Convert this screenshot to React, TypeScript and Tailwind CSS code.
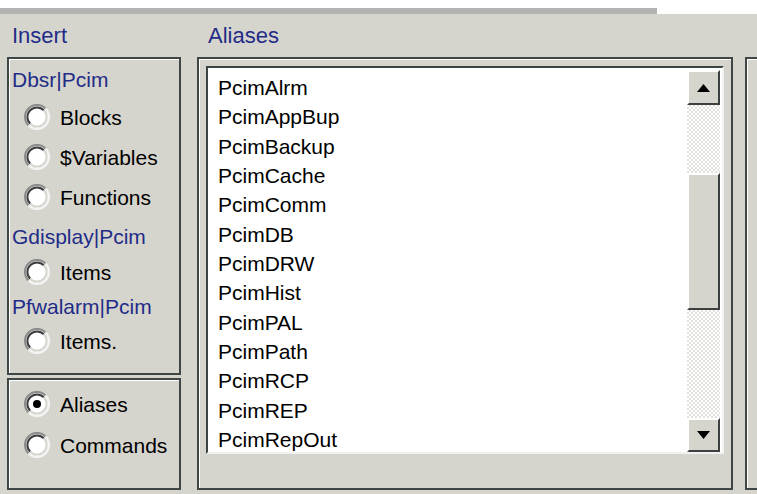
import React from 'react';

const aliases = [
  'PcimAlrm',
  'PcimAppBup',
  'PcimBackup',
  'PcimCache',
  'PcimComm',
  'PcimDB',
  'PcimDRW',
  'PcimHist',
  'PcimPAL',
  'PcimPath',
  'PcimRCP',
  'PcimREP',
  'PcimRepOut',
];

const Radio: React.FC<{ checked?: boolean }> = ({ checked }) => (
  <svg width="26" height="26" viewBox="0 0 26 26" className="shrink-0">
    <circle cx="13" cy="13" r="11" fill="#fff" />
    <path d="M4.5 21.5 A12 12 0 0 1 21.5 4.5" fill="none" stroke="#8a8a8a" strokeWidth="2" />
    <path d="M21.5 4.5 A12 12 0 0 1 4.5 21.5" fill="none" stroke="#f4f4f4" strokeWidth="2" />
    <path d="M6.2 19.8 A9.6 9.6 0 0 1 19.8 6.2" fill="none" stroke="#3c3c3c" strokeWidth="2" />
    <path d="M19.8 6.2 A9.6 9.6 0 0 1 6.2 19.8" fill="none" stroke="#d6d5cd" strokeWidth="2" />
    {checked && <circle cx="13" cy="13" r="4" fill="#000" />}
  </svg>
);

const RadioRow: React.FC<{ label: string; h: string; checked?: boolean }> = ({ label, h, checked }) => (
  <div className={`flex items-center gap-[10px] pl-[15px] ${h}`}>
    <Radio checked={checked} />
    <span className="text-black">{label}</span>
  </div>
);

const GroupLabel: React.FC<{ label: string; h: string }> = ({ label, h }) => (
  <div className={`flex items-center pl-[3px] text-[#1f2c88] ${h}`}>{label}</div>
);

const ScrollButton: React.FC<{ dir: 'up' | 'down'; h: string }> = ({ dir, h }) => (
  <div
    className={`flex items-center justify-center bg-[#d6d5cd] border-2 border-t-white border-l-white border-b-[#3c4040] border-r-[#3c4040] ${h}`}
  >
    <svg width="13" height="8" viewBox="0 0 13 8">
      {dir === 'up' ? <polygon points="6.5,0 13,8 0,8" fill="#000" /> : <polygon points="0,0 13,0 6.5,8" fill="#000" />}
    </svg>
  </div>
);

export default function App() {
  return (
    <div
      className="w-[757px] h-[494px] bg-white flex flex-col overflow-hidden text-[21px] leading-none"
      style={{ fontFamily: '"Liberation Sans", Arial, sans-serif' }}
    >
      <div className="h-[8px] shrink-0" />
      <div className="h-[6px] w-[657px] bg-[#b3b3b3] shrink-0" />
      <div className="flex-1 bg-[#d6d5cd] flex flex-col">
        {/* Headers */}
        <div className="h-[43px] flex items-center text-[#1f2c88] text-[22px]">
          <span className="w-[196px] pl-[12px]">Insert</span>
          <span className="pl-[12px]">Aliases</span>
        </div>

        <div className="flex h-[433px] pl-[7px]">
          {/* Insert options */}
          <div className="w-[174px] flex flex-col gap-[3px]">
            <div className="h-[318px] border-2 border-[#3e4646] shadow-[inset_1px_1px_0_#fff] pt-[2px]">
              <GroupLabel label="Dbsr|Pcim" h="h-[36px]" />
              <RadioRow label="Blocks" h="h-[40px]" />
              <RadioRow label="$Variables" h="h-[40px]" />
              <RadioRow label="Functions" h="h-[40px]" />
              <GroupLabel label="Gdisplay|Pcim" h="h-[38px]" />
              <RadioRow label="Items" h="h-[34px]" />
              <GroupLabel label="Pfwalarm|Pcim" h="h-[35px]" />
              <RadioRow label="Items." h="h-[34px]" />
            </div>
            <div className="h-[112px] border-2 border-[#3e4646] shadow-[inset_1px_1px_0_#fff] pt-[4px]">
              <RadioRow label="Aliases" h="h-[40px]" checked />
              <RadioRow label="Commands" h="h-[42px]" />
            </div>
          </div>

          {/* Aliases list */}
          <div className="ml-[16px] w-[536px] h-[433px] border-2 border-[#3e4646] shadow-[inset_1px_1px_0_#fff] p-[7px]">
            <div className="h-[388px] border-2 border-t-[#3b4343] border-l-[#3b4343] border-b-[#f2f2f2] border-r-[#f2f2f2] bg-white flex">
              <div className="flex-1 pl-[8px] pt-[5px] text-black">
                {aliases.map((a) => (
                  <div key={a} className="h-[29.33px] flex items-center pl-[2px]">
                    {a}
                  </div>
                ))}
              </div>
              <div className="w-[33px] mr-[2px] mt-[2px] flex flex-col">
                <ScrollButton dir="up" h="h-[35px]" />
                <div className="h-[68px] bg-[conic-gradient(#e2e1db_25%,#fff_0_50%,#e2e1db_0_75%,#fff_0)] bg-[length:4px_4px]" />
                <div className="h-[137px] bg-[#d6d5cd] border-2 border-t-white border-l-white border-b-[#3c4040] border-r-[#3c4040]" />
                <div className="flex-1 bg-[conic-gradient(#e2e1db_25%,#fff_0_50%,#e2e1db_0_75%,#fff_0)] bg-[length:4px_4px]" />
                <ScrollButton dir="down" h="h-[34px]" />
              </div>
            </div>
          </div>

          {/* Next panel, cut off */}
          <div className="ml-[12px] flex-1 h-[433px] border-l-2 border-t-2 border-b-2 border-[#3e4646] shadow-[inset_1px_1px_0_#fff]" />
        </div>
      </div>
    </div>
  );
}
